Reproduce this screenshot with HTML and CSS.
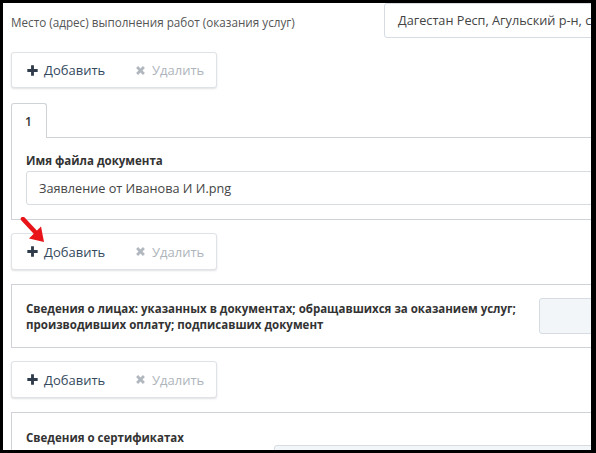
FILE: index.html
```html
<!DOCTYPE html>
<html lang="ru">
<head>
<meta charset="utf-8">
<link rel="stylesheet" href="styles.css">
</head>
<body>
<div class="screen">
  <div class="content">
    <div class="row-place">
      <div class="label">Место (адрес) выполнения работ (оказания услуг)</div>
      <div class="input place-input">Дагестан Респ, Агульский р-н, с Аверкент</div>
    </div>

    <div class="btn-group first">
      <span class="btn btn-add"><svg class="ico" viewBox="0 0 10 10"><path d="M3.7 0.3h2.6v3.4h3.4v2.6H6.3v3.4H3.7V6.3H0.3V3.7h3.4z" fill="#2f3b4a"/></svg>Добавить</span>
      <span class="btn btn-del"><svg class="ico" viewBox="0 0 10 10"><path d="M1 2.8L2.8 1 5 3.2 7.2 1 9 2.8 6.8 5 9 7.2 7.2 9 5 6.8 2.8 9 1 7.2 3.2 5z" fill="#b1b7be"/></svg>Удалить</span>
    </div>

    <div class="tabs">
      <div class="tab-bar"><div class="tab">1</div><div class="tab-line"></div></div>
      <div class="tab-body">
        <div class="field-label">Имя файла документа</div>
        <div class="input file-input">Заявление от Иванова И И.png</div>
      </div>
    </div>

    <div class="btn-group">
      <span class="btn btn-add"><svg class="ico" viewBox="0 0 10 10"><path d="M3.7 0.3h2.6v3.4h3.4v2.6H6.3v3.4H3.7V6.3H0.3V3.7h3.4z" fill="#2f3b4a"/></svg>Добавить</span>
      <span class="btn btn-del"><svg class="ico" viewBox="0 0 10 10"><path d="M1 2.8L2.8 1 5 3.2 7.2 1 9 2.8 6.8 5 9 7.2 7.2 9 5 6.8 2.8 9 1 7.2 3.2 5z" fill="#b1b7be"/></svg>Удалить</span>
    </div>

    <div class="panel panel-persons">
      <div class="panel-label">Сведения о лицах: указанных в документах; обращавшихся за оказанием услуг; производивших оплату; подписавших документ</div>
      <div class="input side-input"></div>
    </div>

    <div class="btn-group">
      <span class="btn btn-add"><svg class="ico" viewBox="0 0 10 10"><path d="M3.7 0.3h2.6v3.4h3.4v2.6H6.3v3.4H3.7V6.3H0.3V3.7h3.4z" fill="#2f3b4a"/></svg>Добавить</span>
      <span class="btn btn-del"><svg class="ico" viewBox="0 0 10 10"><path d="M1 2.8L2.8 1 5 3.2 7.2 1 9 2.8 6.8 5 9 7.2 7.2 9 5 6.8 2.8 9 1 7.2 3.2 5z" fill="#b1b7be"/></svg>Удалить</span>
    </div>

    <div class="panel panel-certs">
      <div class="panel-label">Сведения о сертификатах</div>
      <div class="input cert-input"></div>
    </div>
  </div>

  <svg class="arrow" viewBox="0 0 30 30" width="30" height="30">
    <line x1="3" y1="2" x2="17" y2="17" stroke="#e8141a" stroke-width="4.5" stroke-linecap="round"/>
    <polygon points="24,25 9,21.5 21,9.5" fill="#e8141a"/>
  </svg>
</div>
</body>
</html>
```

FILE: styles.css
```css
* { box-sizing: border-box; }
html, body { margin: 0; padding: 0; background: #000; }
body {
  width: 596px;
  height: 453px;
  padding: 3px 5px 3px 3px;
  font-family: "Open Sans", "Noto Sans", sans-serif;
  color: #333;
}
.screen {
  position: relative;
  width: 588px;
  height: 447px;
  background: #fff;
  overflow: hidden;
}
.content {
  width: 700px;
  padding-left: 8px;
}
.row-place {
  display: flex;
  align-items: center;
  height: 34px;
}
.label {
  width: 373px;
  font-size: 11.7px;
  color: #555;
  padding-top: 4px;
}
.input {
  border: 1px solid #d6dce2;
  border-radius: 3px;
  background: #fff;
  font-size: 12.7px;
  color: #444;
  white-space: nowrap;
  overflow: hidden;
}
.place-input {
  width: 300px;
  height: 35px;
  padding: 8px 13px;
  line-height: 17px;
}
.btn-group {
  display: flex;
  width: 206px;
  height: 37px;
  margin-top: 13px;
  border: 1px solid #dfe2e6;
  border-radius: 3px;
  background: #fff;
  box-shadow: 0 1px 2px rgba(0,0,0,0.12);
  align-items: center;
  padding-left: 15px;
  font-size: 13px;
}
.btn-group.first { margin-top: 15px; height: 36px; }
.btn {
  display: flex;
  align-items: center;
}
.btn-add { color: #34495e; width: 108px; }
.btn-del { color: #aeb4bb; }
.ico { width: 11px; height: 11px; margin-right: 6px; }
.btn-del .ico { width: 11px; height: 11px; margin-right: 6px; }

.tabs { margin-top: 15px; }
.tab-bar { display: flex; height: 35px; }
.tab {
  width: 36px;
  height: 35px;
  border: 1px solid #cfd3d7;
  border-bottom: none;
  border-radius: 3px 3px 0 0;
  font-size: 12px;
  font-weight: 600;
  color: #333;
  padding: 9px 0 0 13px;
}
.tab-line { flex: 1; border-bottom: 1px solid #cfd3d7; }
.tab-body {
  border: 1px solid #cfd3d7;
  border-top: none;
  padding: 15px 14px 14px;
  height: 82px;
}
.field-label {
  font-size: 11.5px;
  font-weight: 700;
  color: #333;
  line-height: 16px;
  margin-bottom: 2px;
}
.file-input {
  width: 640px;
  height: 34px;
  padding: 8px 12px;
  line-height: 17px;
}

.panel {
  margin-top: 14px;
  border: 1px solid #cfd3d7;
  display: flex;
  align-items: center;
  padding: 0 14px;
}
.panel-label {
  font-size: 11.5px;
  font-weight: 700;
  color: #333;
  line-height: 16px;
}
.panel-persons { height: 64px; }
.panel-persons .panel-label { width: 513px; padding-top: 2px; }
.side-input {
  width: 120px;
  height: 36px;
  margin-top: -1px;
  background: #f3f6f9;
}
.panel-certs {
  height: 60px;
  align-items: flex-start;
  padding-top: 17px;
}
.panel-certs .panel-label { width: 248px; }
.cert-input {
  width: 330px;
  height: 34px;
  margin-top: 15px;
  background: #f3f6f9;
}

.arrow {
  position: absolute;
  left: 17px;
  top: 214px;
}
```
